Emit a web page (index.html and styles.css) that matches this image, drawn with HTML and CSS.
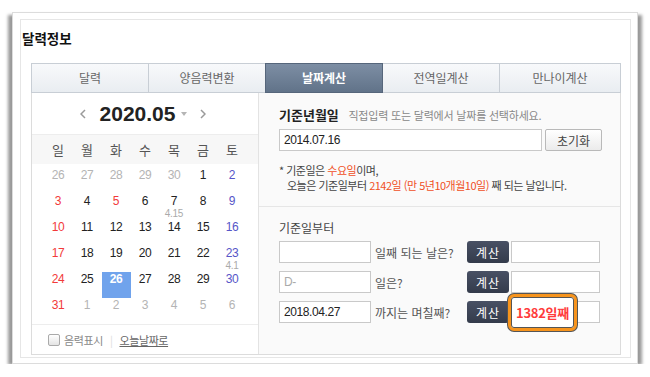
FILE: index.html
```html
<!DOCTYPE html>
<html lang="ko">
<head>
  <meta charset="UTF-8" />
  <title>달력정보 - 날짜계산</title>
  <link rel="stylesheet" href="styles.css">
</head>
<body>
  <div class="paper">
    <div class="sheet">
      <h2 class="title">달력정보</h2>

      <div class="widget">
        <ul class="tabs">
          <li>달력</li>
          <li>양음력변환</li>
          <li class="on">날짜계산</li>
          <li>전역일계산</li>
          <li>만나이계산</li>
        </ul>

        <div class="panes">
          <div class="cal">
            <div class="cal-head">
              <svg class="nav" width="6" height="10" viewBox="0 0 6 10"><path d="M5 1 1 5l4 4" fill="none" stroke="#9a9a9a" stroke-width="1.5"/></svg>
              <strong class="month">2020.05</strong>
              <svg class="drop" width="6" height="4" viewBox="0 0 6 4"><path d="M0 0h6L3 4z" fill="#b5b5b5"/></svg>
              <svg class="nav" width="6" height="10" viewBox="0 0 6 10"><path d="M1 1l4 4-4 4" fill="none" stroke="#9a9a9a" stroke-width="1.5"/></svg>
            </div>

            <div class="week">
              <span>일</span><span>월</span><span>화</span><span>수</span><span>목</span><span>금</span><span>토</span>
            </div>

            <div class="days">
              <span class="day off">26</span><span class="day off">27</span><span class="day off">28</span><span class="day off">29</span><span class="day off">30</span><span class="day">1</span><span class="day sat">2</span>
              <span class="day sun">3</span><span class="day">4</span><span class="day sun">5</span><span class="day">6</span><span class="day">7<em>4.15</em></span><span class="day">8</span><span class="day sat">9</span>
              <span class="day sun">10</span><span class="day">11</span><span class="day">12</span><span class="day">13</span><span class="day">14</span><span class="day">15</span><span class="day sat">16</span>
              <span class="day sun">17</span><span class="day">18</span><span class="day">19</span><span class="day">20</span><span class="day">21</span><span class="day">22</span><span class="day sat">23<em>4.1</em></span>
              <span class="day sun">24</span><span class="day">25</span><span class="day sel">26</span><span class="day">27</span><span class="day">28</span><span class="day">29</span><span class="day sat">30</span>
              <span class="day sun">31</span><span class="day off">1</span><span class="day off">2</span><span class="day off">3</span><span class="day off">4</span><span class="day off">5</span><span class="day off">6</span>
            </div>

            <div class="cal-foot">
              <span class="check"></span>
              <span>음력표시</span>
              <span class="bar">|</span>
              <a class="today" href="#">오늘날짜로</a>
            </div>
          </div>

          <div class="calc">
            <div class="calc-top">
              <div class="head-row">기준년월일 <small>직접입력 또는 달력에서 날짜를 선택하세요.</small></div>
              <div class="date-row">
                <input class="base" type="text" value="2014.07.16">
                <button class="reset">초기화</button>
              </div>
              <p class="note">
                * 기준일은 <span class="red">수요일</span>이며,<br>
                <span class="indent">오늘은 기준일부터 <span class="red">2142일 (만 5년10개월10일)</span> 째 되는 날입니다.</span>
              </p>
            </div>

            <div class="calc-bottom">
              <div class="sub">기준일부터</div>
              <div class="row">
                <input type="text" value="">
                <span class="label">일째 되는 날은?</span>
                <button class="go">계산</button>
                <input class="result" type="text" value="">
              </div>
              <div class="row">
                <input type="text" placeholder="D-">
                <span class="label">일은?</span>
                <button class="go">계산</button>
                <input class="result" type="text" value="">
              </div>
              <div class="row">
                <input type="text" value="2018.04.27">
                <span class="label">까지는 며칠째?</span>
                <button class="go">계산</button>
                <input class="result" type="text" value="">
                <div class="answer">1382일째</div>
              </div>
            </div>
          </div>
        </div>
      </div>
    </div>
  </div>
</body>
</html>
```

FILE: styles.css
```css
* {
  box-sizing: border-box;
}
body {
  margin: 0;
  background: #fff;
  font-family: "Noto Sans CJK KR", "Noto Sans", sans-serif;
  color: #333;
}
.paper {
  margin: 12px 0 0 12px;
  width: 626px;
  height: 352px;
  padding: 6px 6px 5px 7px;
  border: 1px solid #dcdcdc;
  background: #fff;
  box-shadow: -5px 2px 3px -1px rgba(0, 0, 0, 0.4), 5px 2px 3px -1px rgba(0, 0, 0, 0.4);
}
.sheet {
  height: 100%;
  padding: 8px 9px 0 1px;
  border: 1px solid #e6e6e6;
}
.title {
  margin: 0 0 15px;
  font-size: 13.5px;
  line-height: 20px;
  font-weight: bold;
  color: #111;
}
.widget {
  width: 590px;
  margin-left: 9px;
}

/* tabs */
.tabs {
  display: flex;
  margin: 0;
  padding: 0;
  list-style: none;
  height: 30px;
}
.tabs li {
  flex: 0 0 118px;
  margin-left: -1px;
  border: 1px solid #c8ced5;
  background: linear-gradient(#f8f9fb, #e9edf1);
  text-align: center;
  line-height: 27px;
  font-size: 12px;
  color: #666;
}
.tabs li:first-child {
  margin-left: 0;
}
.tabs li:last-child {
  flex: 1;
}
.tabs li.on {
  position: relative;
  border-color: #56667b;
  background: linear-gradient(#7d8ea4, #617389);
  color: #fff;
  font-weight: bold;
}

.panes {
  display: flex;
  height: 262px;
  border: 1px solid #dcdcdc;
  border-top: 0;
}

/* calendar */
.cal {
  width: 227px;
  border-right: 1px solid #e3e3e3;
  background: #fff;
}
.cal-head {
  display: flex;
  align-items: center;
  justify-content: center;
  height: 41px;
  padding-right: 4px;
}
.month {
  margin: 0 6px 0 14px;
  font-family: "Liberation Sans", Arial, sans-serif;
  font-size: 21px;
  color: #222;
}
.drop {
  margin-right: 13px;
}
.week {
  display: grid;
  grid-template-columns: repeat(7, 29px);
  justify-content: center;
  align-items: center;
  height: 30px;
  border-top: 1px solid #ededed;
  background: #f7f7f7;
  font-size: 13px;
  color: #555;
  text-align: center;
}
.days {
  display: grid;
  grid-template-columns: repeat(7, 29px);
  grid-auto-rows: 26px;
  justify-content: center;
  margin-top: 4px;
}
.day {
  text-align: center;
  font-family: "Liberation Sans", Arial, sans-serif;
  font-size: 12px;
  line-height: 14px;
  letter-spacing: -0.3px;
  color: #222;
}
.day em {
  display: block;
  font-style: normal;
  font-size: 10px;
  line-height: 11px;
  color: #aaa;
}
.day.off {
  color: #b4b4b4;
}
.day.sun {
  color: #f23a3a;
}
.day.sat {
  color: #5656c8;
}
.day.sel {
  background: #70a3ec;
  color: #fff;
  font-weight: bold;
}
.cal-foot {
  display: flex;
  align-items: center;
  height: 30px;
  padding-left: 16px;
  border-top: 1px solid #ededed;
  font-size: 11px;
  letter-spacing: -0.4px;
  color: #888;
}
.check {
  width: 12px;
  height: 12px;
  margin-right: 4px;
  border: 1px solid #aaa;
  border-radius: 2px;
  background: linear-gradient(#fff, #e4e4e4);
}
.bar {
  margin: 0 7px;
  color: #ddd;
}
.today {
  color: #666;
  text-decoration: underline;
}

/* date calculator */
.calc {
  flex: 1;
  background: #fafafa;
}
.calc-top {
  height: 114px;
  padding: 14px 0 0 20px;
  border-bottom: 1px solid #e6e6e6;
}
.head-row {
  font-size: 13px;
  line-height: 16px;
  font-weight: bold;
  color: #222;
}
.head-row small {
  margin-left: 6px;
  font-size: 11px;
  font-weight: normal;
  letter-spacing: -0.2px;
  color: #888;
}
.date-row {
  display: flex;
  height: 22px;
  margin-top: 6px;
}
input {
  height: 22px;
  padding: 0 4px;
  border: 1px solid #c9c9c9;
  background: #fff;
  font-family: "Liberation Sans", Arial, sans-serif;
  font-size: 12px;
  letter-spacing: -0.4px;
  color: #222;
  outline: none;
}
input::placeholder {
  color: #aaa;
}
.base {
  width: 263px;
}
.reset {
  width: 57px;
  height: 22px;
  margin-left: 3px;
  padding: 0;
  border: 1px solid #b9b9b9;
  border-radius: 2px;
  background: linear-gradient(#fff, #ebebeb);
  font-family: inherit;
  font-size: 12px;
  color: #444;
}
.note {
  margin: 12px 0 0;
  font-size: 11px;
  line-height: 15px;
  letter-spacing: -0.5px;
  color: #444;
}
.indent {
  padding-left: 8px;
}
.red {
  color: #f0501e;
}
.calc-bottom {
  padding: 13px 0 0 20px;
}
.sub {
  margin-bottom: 5px;
  font-size: 12px;
  line-height: 16px;
  color: #444;
}
.row {
  position: relative;
  display: flex;
  align-items: center;
  height: 22px;
  margin-bottom: 8px;
}
.row input {
  width: 92px;
}
.label {
  width: 96px;
  padding-left: 4px;
  font-size: 12px;
  color: #555;
}
.go {
  width: 42px;
  height: 22px;
  padding: 0;
  border: 0;
  border-radius: 3px;
  background: linear-gradient(#485064, #343b4b);
  font-family: inherit;
  font-size: 12px;
  letter-spacing: 1px;
  color: #fff;
}
.row .result {
  width: 89px;
  margin-left: 2px;
}
.answer {
  position: absolute;
  left: 229px;
  top: -7px;
  display: flex;
  align-items: center;
  justify-content: center;
  width: 69px;
  height: 37px;
  border: 3px solid #f7941d;
  border-radius: 6px;
  background: #fff;
  box-shadow: 0 0 0 1px #555, inset 0 0 0 1px #555;
  font-size: 13px;
  font-weight: bold;
  letter-spacing: -0.3px;
  color: #ff3c3c;
}
```
